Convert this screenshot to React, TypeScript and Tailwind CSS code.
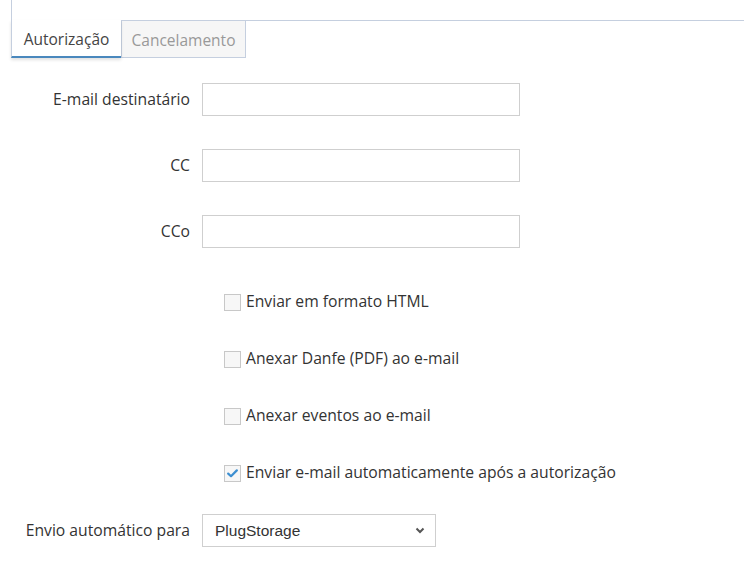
import React from 'react';

const Field: React.FC<{ label: string }> = ({ label }) => (
    <div className="flex items-center h-[33px]">
        <label className="w-[202px] pr-[12px] text-right text-[15.7px] text-[#333]">{label}</label>
        <input type="text" className="w-[318px] h-[33px] border border-[#cfcfcf] bg-white outline-none" />
    </div>
);

const Check: React.FC<{ label: string; checked?: boolean }> = ({ label, checked }) => (
    <div className="flex items-center h-[20px] pl-[224px]">
        <span className="w-[17px] h-[17px] border border-[#c8c8c8] bg-[#f7f7f7] flex items-center justify-center">
            {checked && (
                <svg width="11" height="9" viewBox="0 0 11 9">
                    <path d="M1.2 4.6 L4 7.2 L9.8 1.4" fill="none" stroke="#3d8fd1" strokeWidth="2.2" strokeLinecap="round" strokeLinejoin="round" />
                </svg>
            )}
        </span>
        <span className="ml-[5px] text-[15.7px] text-[#333]">{label}</span>
    </div>
);

export default function App() {
    return (
        <div className="w-[744px] h-[581px] bg-white relative overflow-hidden" style={{ fontFamily: '"Open Sans", sans-serif' }}>
            <div className="ml-[11px] w-px h-[21px] bg-[#c5cfdf]" />
            <div className="flex items-start">
                <div className="ml-[11px] w-[110px] h-[38px] -mt-px pt-[3px] border-l border-[#c5cfdf] border-b-2 border-b-[#4a88bd] bg-white shadow-[0_2px_3px_rgba(0,0,0,0.12)] flex items-center justify-center text-[15.5px] text-[#444] z-10">
                    Autorização
                </div>
                <div className="w-[125px] h-[38px] -mt-px pt-[3px] border border-[#c5cfdf] bg-[#f6f6f6] flex items-center justify-center text-[15.5px] text-[#999]">
                    Cancelamento
                </div>
                <div className="flex-1 h-px bg-[#c5cfdf] -mt-px" />
            </div>
            <div className="mt-[25px] flex flex-col gap-[33px]">
                <Field label="E-mail destinatário" />
                <Field label="CC" />
                <Field label="CCo" />
            </div>
            <div className="mt-[44px] flex flex-col gap-[37px]">
                <Check label="Enviar em formato HTML" />
                <Check label="Anexar Danfe (PDF) ao e-mail" />
                <Check label="Anexar eventos ao e-mail" />
                <Check label="Enviar e-mail automaticamente após a autorização" checked />
            </div>
            <div className="mt-[31px] flex items-center h-[33px]">
                <label className="w-[202px] pr-[12px] text-right text-[15.7px] text-[#333]">Envio automático para</label>
                <div className="w-[234px] h-[33px] border border-[#cfcfcf] bg-white flex items-center justify-between pl-[12px] pr-[10px]">
                    <span className="text-[15.5px] text-[#333]" style={{ fontFamily: '"Liberation Sans", Arial, sans-serif' }}>PlugStorage</span>
                    <svg width="10" height="7" viewBox="0 0 10 7">
                        <path d="M1.5 1.5 L5 5 L8.5 1.5" fill="none" stroke="#555" strokeWidth="2" />
                    </svg>
                </div>
            </div>
        </div>
    );
}
